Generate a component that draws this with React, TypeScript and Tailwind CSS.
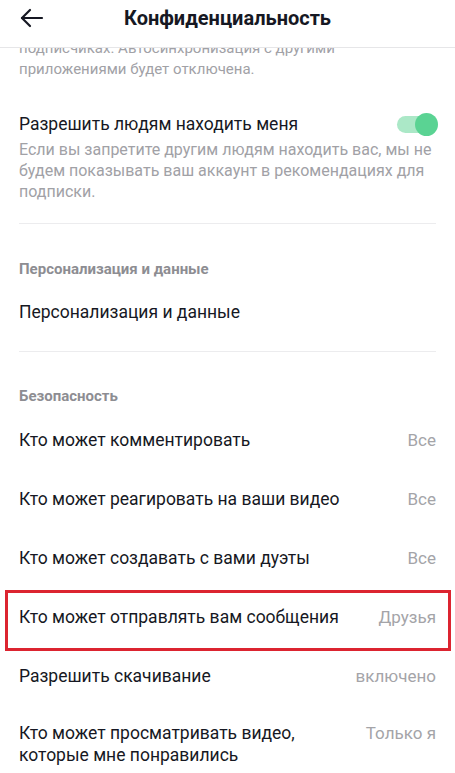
import React from "react";

function Row({ label, value, boxed }: { label: string; value: string; boxed?: boolean }) {
  return (
    <div className="relative flex h-[59px] items-center justify-between px-[19px]">
      <span className="text-[17.5px] leading-[22px] text-[#161823]">{label}</span>
      <span className="text-[17px] leading-[22px] text-[#a4a4a8]">{value}</span>
      {boxed && (
        <div className="pointer-events-none absolute left-[5px] right-[4px] top-[3px] bottom-[-5px] border-[3px] border-[#dc2430]" />
      )}
    </div>
  );
}

export default function App() {
  return (
    <div
      className="flex h-[773px] w-[455px] flex-col overflow-hidden bg-white"
      style={{ fontFamily: "Roboto, 'Noto Sans', sans-serif" }}
    >
      <header className="relative z-10 flex h-12 shrink-0 items-center justify-center border-b border-[#e6e6e8] bg-white">
        <svg
          className="absolute left-[19px] top-[7px]"
          width="26"
          height="22"
          viewBox="0 0 26 22"
          fill="none"
          stroke="#161823"
          strokeWidth="2.2"
          strokeLinecap="round"
          strokeLinejoin="round"
        >
          <path d="M23 11H3" />
          <path d="M11 3L3 11L11 19" />
        </svg>
        <h1 className="-mt-[11px] text-[20px] font-bold leading-[24px] text-[#161823]">Конфиденциальность</h1>
      </header>

      <div className="flex-1 overflow-hidden">
        <div className="-mt-[10px]">
          <p className="px-[19px] text-[15px] leading-[21px] text-[#a1a1a6]">
            подписчиках. Автосинхронизация с другими
            <br />
            приложениями будет отключена.
          </p>

          <div className="mt-[33px] px-[19px]">
            <div className="flex items-center justify-between">
              <span className="text-[17.5px] leading-[22px] text-[#161823]">Разрешить людям находить меня</span>
              <div className="relative mr-[1px] h-[17px] w-[38px] rounded-full bg-[#abe8c7]">
                <div className="absolute -right-[3px] -top-[3px] h-[23px] w-[23px] rounded-full bg-[#5ad393]" />
              </div>
            </div>
            <p className="mt-[4px] whitespace-nowrap text-[16px] leading-[21px] text-[#a1a1a6]">
              Если вы запретите другим людям находить вас, мы не
              <br />
              будем показывать ваш аккаунт в рекомендациях для
              <br />
              подписки.
            </p>
          </div>

          <div className="mx-[19px] mt-[21px] border-t border-[#ececee]" />

          <div className="mt-[35px] px-[19px] text-[15px] font-bold leading-[20px] text-[#8d8d92]">
            Персонализация и данные
          </div>
          <div className="mt-[22px] px-[19px] text-[17.5px] leading-[22px] text-[#161823]">Персонализация и данные</div>

          <div className="mx-[19px] mt-[28px] border-t border-[#ececee]" />

          <div className="mt-[34px] px-[19px] text-[15px] font-bold leading-[20px] text-[#8d8d92]">Безопасность</div>

          <div className="mt-[4px]">
            <Row label="Кто может комментировать" value="Все" />
            <Row label="Кто может реагировать на ваши видео" value="Все" />
            <Row label="Кто может создавать с вами дуэты" value="Все" />
            <Row label="Кто может отправлять вам сообщения" value="Друзья" boxed />
            <Row label="Разрешить скачивание" value="включено" />
            <div className="flex items-start justify-between px-[19px] pt-[17px]">
              <span className="text-[17.5px] leading-[22px] text-[#161823]">
                Кто может просматривать видео,
                <br />
                которые мне понравились
              </span>
              <span className="text-[17px] leading-[22px] text-[#a4a4a8]">Только я</span>
            </div>
          </div>
        </div>
      </div>
    </div>
  );
}
